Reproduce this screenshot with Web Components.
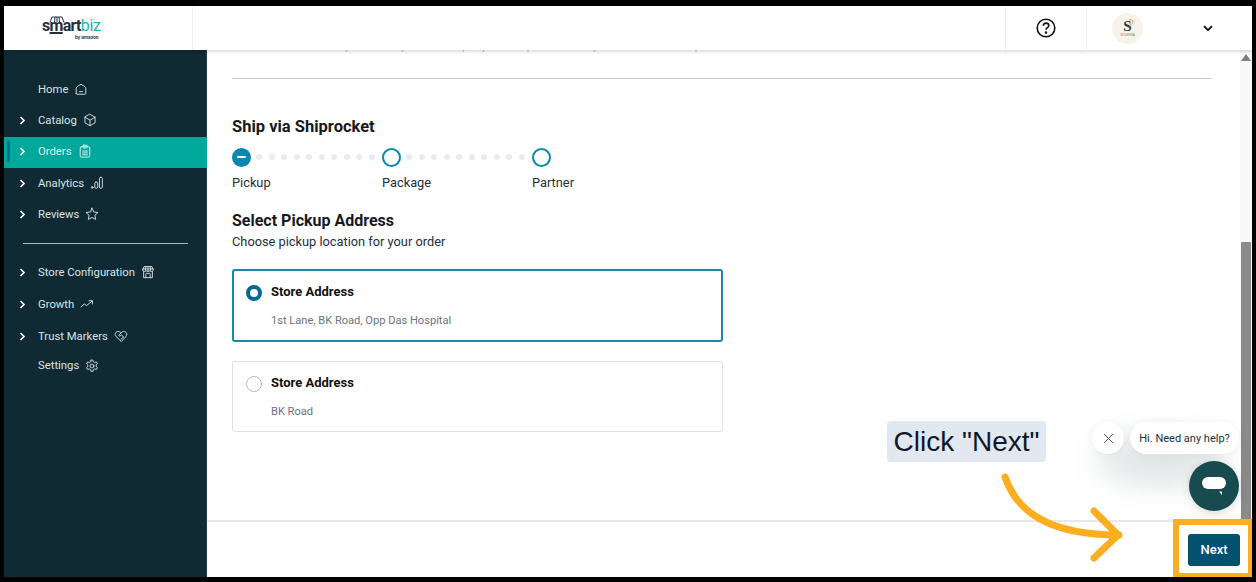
<!DOCTYPE html>
<html lang="en"><head><meta charset="utf-8"><title>Ship via Shiprocket</title>
<style>
html,body{margin:0;height:100%;background:#000;overflow:hidden}
body{font-family:Roboto,"Noto Sans",sans-serif}
</style></head><body>
<app-shell>
  <top-bar slot="top"></top-bar>
  <side-nav slot="side">
    <nav-item label="Home" icon="home" nochev up h="31"></nav-item>
    <nav-item label="Catalog" icon="box" up h="31"></nav-item>
    <nav-item label="Orders" icon="clip" active up h="31"></nav-item>
    <nav-item label="Analytics" icon="bars" upless h="31"></nav-item>
    <nav-item label="Reviews" icon="star" upless h="31"></nav-item>
    <nav-divider></nav-divider>
    <nav-item label="Store Configuration" icon="store" h="32"></nav-item>
    <nav-item label="Growth" icon="trend" h="32"></nav-item>
    <nav-item label="Trust Markers" icon="heart" h="32"></nav-item>
    <nav-item label="Settings" icon="gear" nochev h="27"></nav-item>
  </side-nav>
  <ship-page slot="main"></ship-page>
</app-shell>
<script>
const ICONS={
home:'<path d="M2.500 13V7.600c0-1 .5-1.900 1.300-2.400L8 2.500l4.200 2.700c.8.500 1.300 1.400 1.300 2.400V13c0 .6-.4 1-1 1h-9c-.6 0-1-.4-1-1Z"/><path d="M6.300 11h3.400"/>',
box:'<path d="M8 1.500l5.800 3.300v6.400L8 14.500l-5.800-3.300V4.800z"/><path d="M2.200 4.800 8 8.200l5.800-3.400M8 8.200v6.300"/>',
clip:'<rect x="2.500" y="3" width="11" height="12" rx="1.500"/><rect x="5.500" y="1.300" width="5" height="3.200" rx=".8"/><path d="M5.300 8h5.400M5.300 10.200h5.400M5.300 12.400h5.400"/>',
bars:'<circle cx="2.500" cy="13" r="1"/><rect x="5.500" y="7" width="3.300" height="7" rx="1.300"/><rect x="10.800" y="1.500" width="3.300" height="12.500" rx="1.300"/>',
star:'<path d="M8 1.300l2 4.400 4.800.6-3.500 3.200.9 4.700L8 11.900l-4.200 2.300.9-4.700-3.500-3.200 4.800-.6z"/>',
store:'<path d="M3 7.500V14.500h10V7.500M2 5.500 3.500 1.800h9L14 5.500c0 1.200-1 2-2 2s-1.500-.5-2-1c-.5.500-1.100 1-2 1s-1.500-.5-2-1c-.5.500-1 1-2 1s-2-.8-2-2ZM5.500 14.500v-4c0-.6.400-1 1-1h3c.6 0 1 .4 1 1v4M5.500 1.800 5 6.300M10.500 1.800l.5 4.500M8 1.800v4.700M2 4.500h12"/>',
trend:'<path d="M1 11.500 4.800 8l2.700 1.800L14 4.500M10.300 4.300h3.900V8"/>',
heart:'<path d="M8 14 2 8.200C.5 6.500 1.500 2.800 4.800 2.800c1.300 0 2.400.7 3.200 1.800.8-1.100 1.900-1.800 3.200-1.800 3.300 0 4.300 3.700 2.800 5.400z"/><path d="M8 4.600 5.300 7.200l1.300 1 1.900-1.300 2.600 2.300L8 11.700"/>',
gear:'<circle cx="8" cy="8" r="2.200"/><path d="M6.800 1.300h2.400l.4 1.900 1.500.8 1.900-.6 1.200 2.100-1.500 1.300v1.800l1.500 1.300-1.200 2.100-1.900-.6-1.500.8-.4 1.900H6.800l-.4-1.900-1.500-.8-1.900.6-1.200-2.100 1.500-1.300V7.100L1.800 5.700 3 3.400l1.900.6 1.500-.8z"/>'
};
function def(name,html,cls){
  const t=document.createElement('template');t.innerHTML=html;
  customElements.define(name,class extends HTMLElement{
    constructor(){super();this.attachShadow({mode:'open'}).appendChild(t.content.cloneNode(true));}
    connectedCallback(){cls&&cls.call(this,this.shadowRoot);}
  });
}
def('app-shell',`<style>
:host{display:grid;box-sizing:border-box;width:1256px;height:582px;padding:6px 4px 5px 4px;grid-template:44px 1fr/203px 1fr;background:#000;position:relative;overflow:hidden}
::slotted([slot=top]){grid-column:1/3}
</style><slot name="top"></slot><slot name="side"></slot><slot name="main"></slot>`);

def('top-bar',`<style>
:host{display:flex;background:#fff;height:44px;box-shadow:0 2px 3px rgba(0,0,0,.14);position:relative;z-index:2;color:#0f1111}
.logo{width:189px;box-sizing:border-box;padding:12px 0 0 38px;border-right:1px solid #f1f2f2;position:relative;flex:none}
.wm{font:700 16px/16px Roboto,sans-serif;letter-spacing:-.7px;color:#232f3e;display:block;white-space:nowrap}
.wm b{font-weight:400;color:#22b5ad;letter-spacing:-.4px}
.wm u{text-decoration:underline;text-decoration-thickness:1.500px;text-underline-offset:1px}
.by{display:block;font:700 5px/5px Roboto,sans-serif;color:#3b4652;margin:1px 0 0 33px;white-space:nowrap;letter-spacing:-.1px}
.awn{position:absolute;left:45px;top:10px}
.sp{flex:1}
.help{width:81px;border-left:1px solid #f1f2f2;display:flex;align-items:center;justify-content:center;flex:none;padding-right:1px;box-sizing:border-box}
.user{width:166px;border-left:1px solid #f1f2f2;display:flex;align-items:center;flex:none;box-sizing:border-box;padding-left:25px}
.av{width:31px;height:31px;border-radius:50%;background:#f7f3e8;display:flex;flex-direction:column;align-items:center;justify-content:center;flex:none;color:#2b3b45;position:relative}
.av i{font:700 15px/13px "Liberation Serif",serif}
.av u{text-decoration:none;font:3px/4px "Liberation Sans",sans-serif;color:#777}
.av svg{position:absolute;left:16px;top:6px}
.chev{margin-left:60px}
</style>
<div class="logo"><svg class="awn" width="16" height="7" viewBox="0 0 16 7" fill="none" stroke="#232f3e" stroke-width="1"><path d="M1 6.500 3 1h10l2 5.500M6 1 5.500 6.500M8 1v5.500M10 1l.5 5.500"/></svg><span class="wm">s<u>m</u>art<b>biz</b></span><span class="by">by amazon</span></div>
<div class="sp"></div>
<div class="help"><svg width="20" height="20" viewBox="0 0 20 20" fill="none" stroke="#0f1111" stroke-width="1.600"><circle cx="10" cy="10" r="8.800"/><path d="M7.300 7.800c0-1.600 1.200-2.700 2.800-2.700s2.700 1 2.700 2.400c0 2.200-2.800 2.200-2.800 4.300"/><circle cx="10" cy="14.600" r=".5" fill="#0f1111"/></svg></div>
<div class="user"><div class="av"><i>S</i><u>SOLENNA</u><svg width="6" height="7" viewBox="0 0 6 7" fill="none" stroke="#d99a5b" stroke-width="1"><path d="M1 1c2-1 4 0 4 2S3 6 1 6.500"/></svg></div><svg class="chev" width="10" height="7" viewBox="0 0 10 7" fill="none" stroke="#0f1111" stroke-width="1.900"><path d="M1 1.200 5 5.200l4-4"/></svg></div>`);

def('side-nav',`<style>
:host{display:block;background:#102a33;padding-top:25px;height:527px;box-sizing:border-box;box-shadow:inset -1px 0 0 #26404a}
</style><slot></slot>`);

def('nav-divider',`<style>
:host{display:block;height:1px;background:#a9b5b9;margin:13px 19px 12px 19px}
</style>`);

def('nav-item',`<style>
:host{display:flex;align-items:center;box-sizing:border-box;padding-left:15px;color:#d9e3e4;font-size:11.300px;position:relative}
:host([up]){padding-bottom:3px}
:host([upless]){padding-bottom:1px}
:host([active]){background:#00a89b;color:#dff3f1}
.ch{width:19px;flex:none;display:flex}
.ic{margin-left:6px;fill:none;stroke:currentColor;stroke-width:1.050;stroke-linejoin:round;stroke-linecap:round;flex:none}
.bar{display:none;position:absolute;left:3px;top:3px;bottom:6px;width:3px;border-radius:2px;background:#006f8f}
:host([active]) .bar{display:block}
</style><span class="bar"></span><span class="ch"><svg id="c" width="7" height="9" viewBox="0 0 7 9" fill="none" stroke="#fff" stroke-width="1.600"><path d="M1.500 1 5 4.500 1.500 8"/></svg></span><span id="t"></span><svg class="ic" id="i" width="14" height="14" viewBox="0 0 16 16"></svg>`,
function(s){
  this.style.height=this.getAttribute('h')+'px';
  s.getElementById('t').textContent=this.getAttribute('label');
  s.getElementById('i').innerHTML=ICONS[this.getAttribute('icon')];
  if(this.hasAttribute('nochev'))s.getElementById('c').style.visibility='hidden';
});

def('ship-stepper',`<style>
:host{display:grid;grid-template-columns:150px 150px auto;justify-content:start;color:#232f3e;font-size:12.800px;line-height:17px}
.s{display:flex;flex-direction:column;gap:7px}
.r{display:flex;align-items:center;height:20px}
.c{width:19px;height:19px;border-radius:50%;box-sizing:border-box;border:2px solid #0b87b2;flex:none;display:flex;align-items:center;justify-content:center;background:#fff}
.c.on{background:#0b87b2}
.c.on::after{content:"";width:9px;height:2px;background:#fff;border-radius:1px}
.d{display:flex;gap:6.500px;margin-left:5px}
.d i{width:6px;height:6px;border-radius:50%;background:#e8ebf0}
</style>
<div class="s"><div class="r"><span class="c on"></span><span class="d"><i></i><i></i><i></i><i></i><i></i><i></i><i></i><i></i><i></i><i></i></span></div><span>Pickup</span></div>
<div class="s"><div class="r"><span class="c"></span><span class="d"><i></i><i></i><i></i><i></i><i></i><i></i><i></i><i></i><i></i><i></i></span></div><span>Package</span></div>
<div class="s"><div class="r"><span class="c"></span></div><span>Partner</span></div>`);

def('address-card',`<style>
:host{display:grid;grid-template-columns:16px 1fr;column-gap:9px;box-sizing:border-box;width:491px;height:71px;background:#fff;border:1px solid #dfe2e5;border-radius:3px;padding:12px 13px 0;box-shadow:0 0 1px rgba(0,0,0,.06)}
:host([selected]){border:2px solid #1a87ab;padding:12px 12px 0;height:73px}
.rd{width:16px;height:16px;border-radius:50%;box-sizing:border-box;border:1px solid #b9bdc2;margin-top:2px;background:#fff}
:host([selected]) .rd{border:4.500px solid #056a8f;margin-top:2px}
.n{font-size:13px;font-weight:700;color:#0f1111;line-height:18px}
.a{font-size:11.100px;color:#6b7480;line-height:14px;margin-top:13px}
:host([selected]) .a{margin-top:13px}
</style><span class="rd"></span><div><div class="n"><slot name="name"></slot></div><div class="a"><slot name="addr"></slot></div></div>`);

def('ship-page',`<style>
:host{display:flex;flex-direction:column;height:527px;background:#fff;position:relative;color:#0f1111;overflow:hidden}
.scroll{flex:1;min-height:0;display:flex;overflow:hidden}
.body{flex:1;min-width:0;padding:0 28px 0 25px;position:relative}
.ticks{position:absolute;left:0;top:0}
hr{border:0;height:1px;background:#c3ccd4;margin:28px 0 0}
h2{font-size:16.500px;font-weight:700;line-height:22px;margin:37px 0 9px;color:#16191f}
h3{font-size:16px;font-weight:700;line-height:20px;margin:20px 0 0;color:#16191f}
p{font-size:12.800px;line-height:17px;margin:2px 0 19px;color:#232f3e}
.cards{display:flex;flex-direction:column;gap:19px}
.sb{width:12px;background:#f9f9f9;flex:none;position:relative;display:flex;flex-direction:column;align-items:center;justify-content:space-between}
.up{width:0;height:0;border:5px solid transparent;border-top:0;border-bottom:7px solid #7f7f7f;margin-top:4px}
.th{width:10px;height:278px;background:#8a8a8a;border-radius:1px}
.foot{height:57px;flex:none;box-sizing:border-box;border-top:2px solid #e8e8e8;display:flex;justify-content:flex-end;align-items:center;padding-right:12px}
.btn{all:unset;width:52px;height:32px;background:#03506f;color:#fff;font-size:13px;font-weight:500;text-align:center;border-radius:3px;line-height:32px;font-family:inherit}
</style>
<div class="scroll"><div class="body">
<svg class="ticks" width="520" height="3" fill="none" stroke="#bbb" stroke-width="1"><path d="M139 2l1-2M195 2l1-2M256 2l1-2M276 2l1-2M321 2V0M387 2l1-2M489 2V0"/></svg>
<hr>
<h2>Ship via Shiprocket</h2>
<ship-stepper></ship-stepper>
<h3>Select Pickup Address</h3>
<p>Choose pickup location for your order</p>
<div class="cards">
<address-card selected><span slot="name">Store Address</span><span slot="addr">1st Lane, BK Road, Opp Das Hospital</span></address-card>
<address-card><span slot="name">Store Address</span><span slot="addr">BK Road</span></address-card>
</div></div>
<div class="sb"><span class="up"></span><span class="th"></span></div></div>
<div class="foot"><button class="btn">Next</button></div>
<guide-callout></guide-callout><chat-launcher></chat-launcher>`);

def('guide-callout',`<style>
:host{display:block;position:absolute;inset:0;pointer-events:none}
.tip{position:absolute;left:680px;top:371px;height:41px;width:159px;box-sizing:border-box;background:#e2e8f0;border-radius:4px;font:28px/41px "Liberation Sans",sans-serif;color:#0f172a;text-align:center;white-space:nowrap}
svg{position:absolute;left:790px;top:420px}
.box{position:absolute;left:966px;top:469px;width:79px;height:58px;box-sizing:border-box;border:solid #fdae1e;border-width:6px 4px 4px 6px}
</style>
<div class="tip">Click "Next"</div>
<svg width="130" height="95" viewBox="0 0 130 95" fill="none" stroke="#fdae1e" stroke-width="7" stroke-linecap="round" stroke-linejoin="round"><path d="M8 7C20 42 52 65 122 65"/><path d="M97 41l24 24-24 23"/></svg>
<div class="box"></div>`);

def('chat-launcher',`<style>
:host{display:block;position:absolute;inset:0;pointer-events:none}
.glow{position:absolute;left:890px;top:385px;width:130px;height:50px;border-radius:50%;background:rgba(40,80,80,.14);filter:blur(14px)}
.x{position:absolute;left:885px;top:372px;width:32px;height:32px;border-radius:50%;background:#fff;display:flex;align-items:center;justify-content:center;box-shadow:0 1px 8px rgba(0,0,0,.06)}
.msg{position:absolute;left:923px;top:372px;width:109px;height:32px;border-radius:16px;background:#fff;font-size:11px;line-height:33px;color:#232f3e;text-align:center;white-space:nowrap;box-shadow:0 1px 8px rgba(0,0,0,.06)}
.fab{position:absolute;left:982px;top:411px;width:50px;height:50px;border-radius:50%;background:#174b4f;display:flex;align-items:center;justify-content:center;box-shadow:0 2px 10px rgba(0,0,0,.16)}
</style><div class="glow"></div>
<div class="x"><svg width="11" height="11" viewBox="0 0 11 11" stroke="#555" stroke-width="1"><path d="M1 1l9 9M10 1l-9 9"/></svg></div>
<div class="msg">Hi. Need any help?</div>
<div class="fab"><svg width="26" height="22" viewBox="0 0 26 22"><rect x="1" y="2" width="24" height="12" rx="6" fill="#fff"/><path d="M21 16.500h-3l3 3.500z" fill="#fff"/></svg></div>`);
</script>
</body></html>
